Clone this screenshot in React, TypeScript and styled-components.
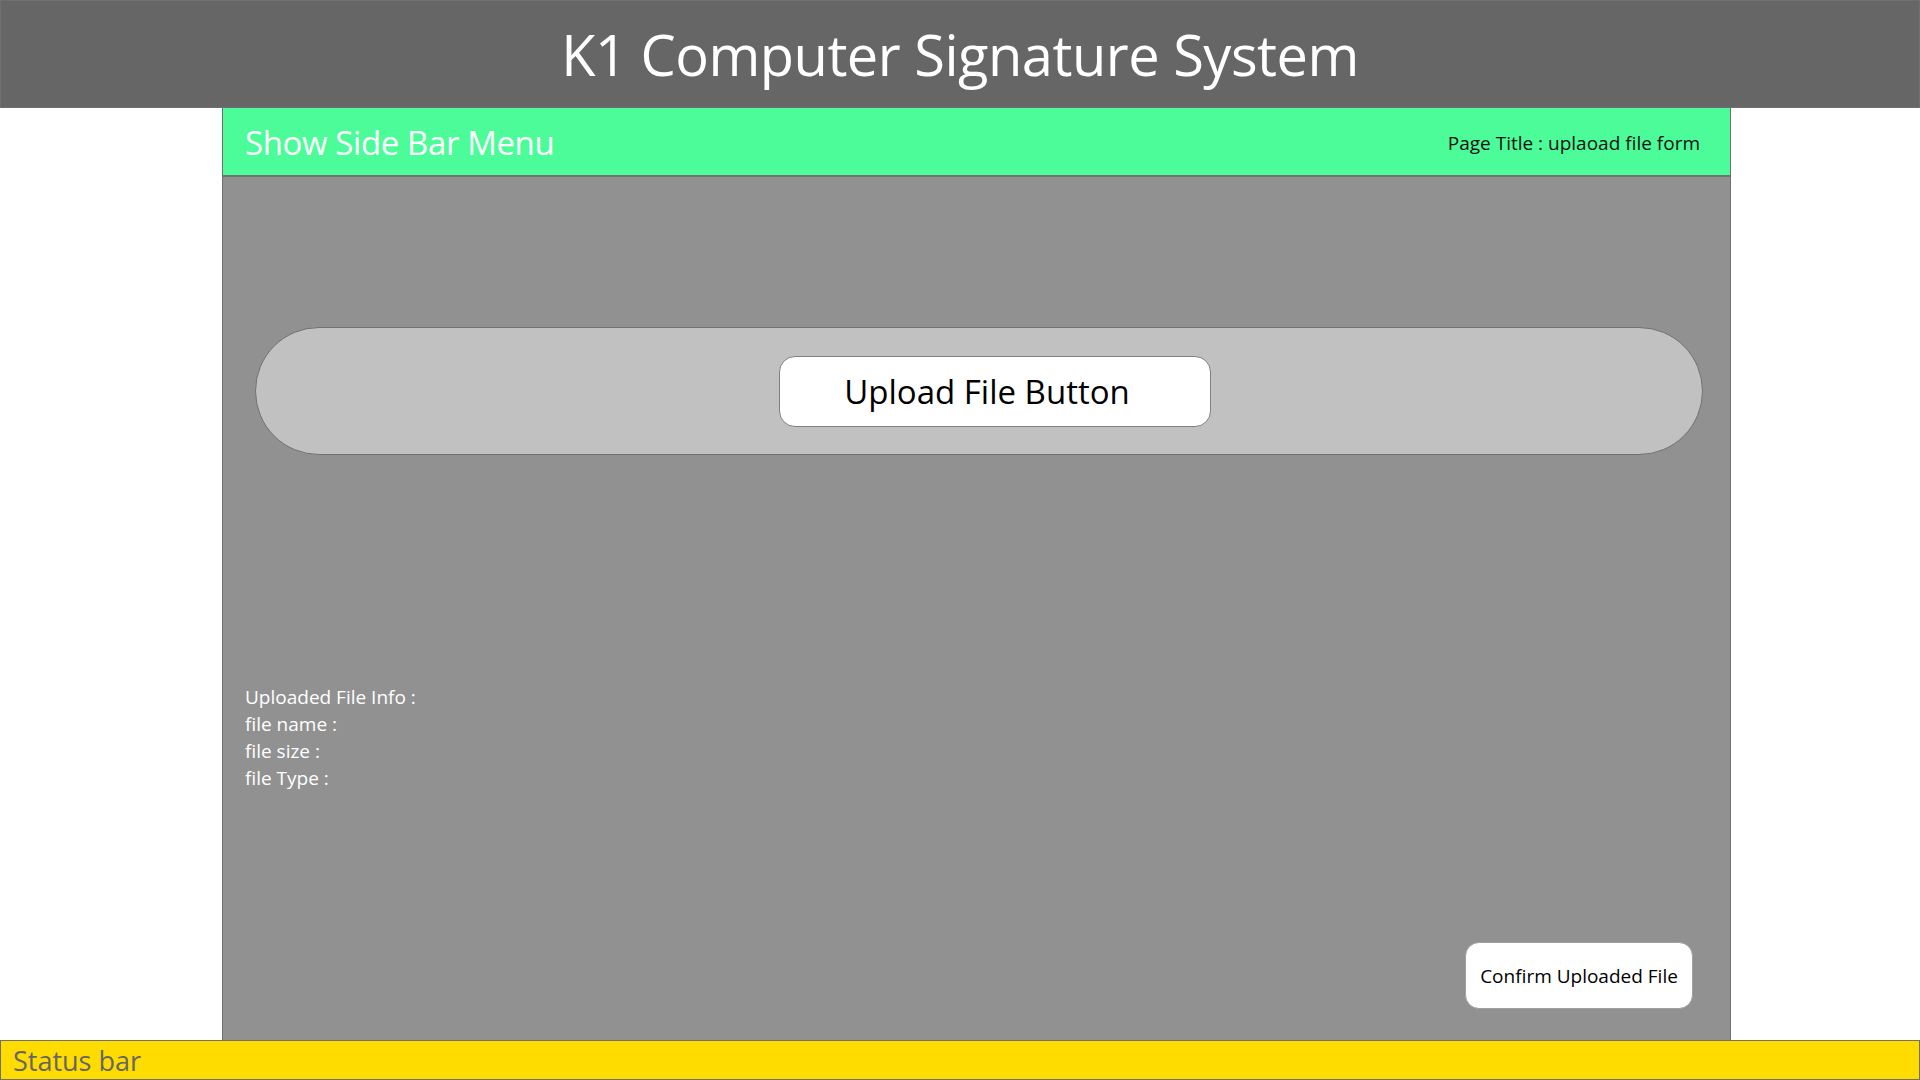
import React, { FC } from "react";
import styled, { createGlobalStyle } from "styled-components";

const GlobalStyle = createGlobalStyle`
  html, body {
    margin: 0;
    padding: 0;
    background: #ffffff;
    font-family: "Open Sans", "Noto Sans", "Liberation Sans", sans-serif;
  }
  * {
    box-sizing: border-box;
  }
`;

const Page = styled.div`
  display: flex;
  flex-direction: column;
  width: 1920px;
  height: 1080px;
  overflow: hidden;
`;

const Header = styled.header`
  display: flex;
  align-items: center;
  justify-content: center;
  height: 108px;
  flex-shrink: 0;
  background: #666666;
  border: 1px solid #707070;
`;

const HeaderTitle = styled.h1`
  margin: 0;
  color: #ffffff;
  font-size: 56px;
  font-weight: 400;
  letter-spacing: -0.5px;
`;

const Body = styled.div`
  display: flex;
  flex: 1;
  padding-left: 222px;
  min-height: 0;
`;

const MainColumn = styled.main`
  display: flex;
  flex-direction: column;
  width: 1509px;
  border-left: 1px solid #707070;
  border-right: 1px solid #707070;
  background: #919191;
`;

const TopBar = styled.div`
  display: flex;
  align-items: center;
  justify-content: space-between;
  height: 69px;
  padding: 2px 30px 0 22px;
  background: #4bfc99;
  border-bottom: 2px solid #707070;
`;

const MenuToggle = styled.span`
  color: #ffffff;
  font-size: 33px;
  letter-spacing: -0.4px;
`;

const PageTitle = styled.span`
  color: #111111;
  font-size: 19px;
`;

const Content = styled.div`
  display: flex;
  flex-direction: column;
  flex: 1;
  padding: 150px 27px 31px 22px;
`;

const UploadZone = styled.div`
  display: flex;
  align-items: center;
  justify-content: center;
  height: 128px;
  margin-left: 10px;
  padding-left: 32px;
  background: #c1c1c1;
  border: 1px solid #707070;
  border-radius: 64px;
`;

const Button = styled.button<{ $size: "large" | "small" }>`
  display: flex;
  align-items: center;
  justify-content: center;
  width: ${(p) => (p.$size === "large" ? "432px" : "228px")};
  height: ${(p) => (p.$size === "large" ? "71px" : "67px")};
  padding: ${(p) => (p.$size === "large" ? "0 16px 0 0" : "0")};
  background: #ffffff;
  border: 1px solid ${(p) => (p.$size === "large" ? "#808080" : "#a0a0a0")};
  border-radius: ${(p) => (p.$size === "large" ? "16px" : "14px")};
  color: #000000;
  font-family: inherit;
  font-size: ${(p) => (p.$size === "large" ? "33px" : "19px")};
  cursor: pointer;
`;

const FileInfo = styled.div`
  display: flex;
  flex-direction: column;
  margin-top: 229px;
  color: #ffffff;
  font-size: 19px;
  line-height: 27px;
`;

const Footer = styled.div`
  display: flex;
  justify-content: flex-end;
  margin-top: auto;
  padding-right: 10px;
`;

const StatusBar = styled.footer`
  display: flex;
  align-items: center;
  height: 40px;
  flex-shrink: 0;
  padding-left: 12px;
  background: #ffdc00;
  border: 1px solid #707070;
  color: #666666;
  font-size: 27px;
`;

const infoLines = ["Uploaded File Info :", "file name :", "file size :", "file Type :"];

const App: FC = () => {
  return (
    <>
      <GlobalStyle />
      <Page>
        <Header>
          <HeaderTitle>K1 Computer Signature System</HeaderTitle>
        </Header>
        <Body>
          <MainColumn>
            <TopBar>
              <MenuToggle>Show Side Bar Menu</MenuToggle>
              <PageTitle>Page Title : uplaoad file form</PageTitle>
            </TopBar>
            <Content>
              <UploadZone>
                <Button $size="large">Upload File Button</Button>
              </UploadZone>
              <FileInfo>
                {infoLines.map((line) => (
                  <div key={line}>{line}</div>
                ))}
              </FileInfo>
              <Footer>
                <Button $size="small">Confirm Uploaded File</Button>
              </Footer>
            </Content>
          </MainColumn>
        </Body>
        <StatusBar>Status bar</StatusBar>
      </Page>
    </>
  );
};

export default App;
